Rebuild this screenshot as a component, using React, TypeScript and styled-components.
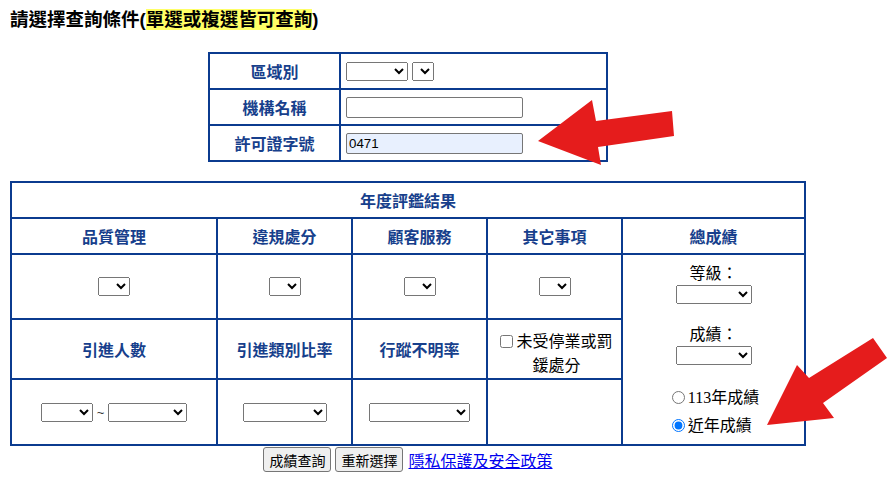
import React from "react";
import styled, { createGlobalStyle } from "styled-components";

const BORDER = "#0b3b8f";
const HEAD = "#173f8c";

const Global = createGlobalStyle`
  html, body { margin: 0; padding: 0; background: #fff; }
  body {
    font-family: "Liberation Serif", "Noto Sans CJK TC", serif;
    font-size: 16px;
    color: #000;
  }
`;

const Page = styled.div`
  position: relative;
  width: 896px;
  height: 484px;
  padding: 9px 0 0 10px;
  box-sizing: border-box;
  overflow: hidden;
`;

const Content = styled.div`
  width: 796px;
`;

const Title = styled.h1`
  margin: 0;
  font: bold 18.5px/22px "Liberation Sans", "Noto Sans CJK TC", sans-serif;
  color: #000;
`;

const Highlight = styled.span`
  background: #ffff66;
`;

const SearchTable = styled.table`
  margin: 21px auto 0;
  border-collapse: collapse;
`;

const LabelCell = styled.th`
  width: 129px;
  height: 34px;
  padding: 0;
  border: 2px solid ${BORDER};
  font: bold 16px "Noto Sans CJK TC", sans-serif;
  color: ${HEAD};
  text-align: center;
  vertical-align: middle;
`;

const FieldCell = styled.td`
  width: 260px;
  height: 34px;
  padding: 0 0 0 5px;
  border: 2px solid ${BORDER};
  vertical-align: middle;
`;

const FieldRow = styled.div`
  display: flex;
  align-items: center;
  gap: 4px;
`;

const Select = styled.select<{ $w: number }>`
  width: ${(p) => p.$w}px;
  height: 19px;
  font: 13.33px "Liberation Sans", sans-serif;
  margin: 0;
  box-sizing: border-box;
`;

const TextInput = styled.input<{ $filled?: boolean }>`
  width: 177px;
  height: 21px;
  box-sizing: border-box;
  margin: 0;
  padding: 1px 2px;
  font: 13.33px "Liberation Sans", sans-serif;
  border: 1px solid #767676;
  border-radius: 2px;
  background: ${(p) => (p.$filled ? "#e8f0fe" : "#fff")};
  color: #000;
`;

const ResultTable = styled.table`
  margin-top: 19px;
  width: 794px;
  border-collapse: collapse;
  table-layout: fixed;
`;

const HeadCell = styled.th<{ $h: number }>`
  height: ${(p) => p.$h}px;
  padding: 0;
  border: 2px solid ${BORDER};
  font: bold 16px "Noto Sans CJK TC", sans-serif;
  color: ${HEAD};
  text-align: center;
  vertical-align: middle;
`;

const SelectCell = styled.td<{ $h: number }>`
  height: ${(p) => p.$h}px;
  padding: 0;
  border: 2px solid ${BORDER};
  text-align: center;
  vertical-align: middle;
`;

const CenterRow = styled.div`
  display: flex;
  justify-content: center;
  align-items: center;
  gap: 4px;
`;

const Tilde = styled.span`
  font: 13px "Liberation Sans", sans-serif;
  color: #333;
`;

const CheckCell = styled.td<{ $h: number }>`
  height: ${(p) => p.$h}px;
  padding: 10px 0 0 4px;
  box-sizing: border-box;
  border: 2px solid ${BORDER};
  text-align: center;
  vertical-align: top;
  font-size: 16px;
  line-height: 24px;
`;

const Check = styled.input`
  width: 13px;
  height: 13px;
  margin: 0 3px 0 0;
  vertical-align: -1px;
`;

const TotalCell = styled.td`
  padding: 0;
  border: 2px solid ${BORDER};
  vertical-align: middle;
`;

const TotalStack = styled.div`
  display: flex;
  flex-direction: column;
  align-items: center;
`;

const TotalLabel = styled.div<{ $top: number }>`
  margin-top: ${(p) => p.$top}px;
  line-height: 23px;
  font-size: 16px;
`;

const RadioGroup = styled.div`
  margin-top: 21px;
  display: flex;
  flex-direction: column;
  align-items: flex-start;
  gap: 5px;
  padding-left: 4px;
`;

const RadioLabel = styled.label`
  display: flex;
  align-items: center;
  line-height: 23px;
  font-size: 16px;
`;

const Radio = styled.input`
  width: 13px;
  height: 13px;
  margin: 0 3px 0 0;
`;

const Actions = styled.div`
  display: flex;
  justify-content: center;
  align-items: center;
  gap: 4px;
  margin-top: 1px;
`;

const Button = styled.button`
  height: 25px;
  padding: 0 5px;
  font: 14px "Noto Sans CJK TC", sans-serif;
  color: #000;
  background: #efefef;
  border: 1px solid #767676;
  border-radius: 3px;
`;

const Policy = styled.a`
  margin-left: 1px;
  font: 16px "Liberation Serif", "Noto Sans CJK TC", serif;
  color: #0000ee;
  text-decoration: underline;
`;

const Overlay = styled.svg`
  position: absolute;
  left: 0;
  top: 0;
  pointer-events: none;
`;

export default function App() {
  return (
    <>
      <Global />
      <Page>
        <Content>
          <Title>
            請選擇查詢條件(<Highlight>單選或複選皆可查詢</Highlight>)
          </Title>

          <SearchTable>
            <tbody>
              <tr>
                <LabelCell>區域別</LabelCell>
                <FieldCell>
                  <FieldRow>
                    <Select $w={62}>
                      <option></option>
                    </Select>
                    <Select $w={22}>
                      <option></option>
                    </Select>
                  </FieldRow>
                </FieldCell>
              </tr>
              <tr>
                <LabelCell>機構名稱</LabelCell>
                <FieldCell>
                  <TextInput type="text" />
                </FieldCell>
              </tr>
              <tr>
                <LabelCell>許可證字號</LabelCell>
                <FieldCell>
                  <TextInput type="text" $filled defaultValue="0471" />
                </FieldCell>
              </tr>
            </tbody>
          </SearchTable>

          <ResultTable>
            <colgroup>
              <col style={{ width: 206 }} />
              <col style={{ width: 135 }} />
              <col style={{ width: 135 }} />
              <col style={{ width: 135 }} />
              <col style={{ width: 183 }} />
            </colgroup>
            <tbody>
              <tr>
                <HeadCell $h={34} colSpan={5}>
                  年度評鑑結果
                </HeadCell>
              </tr>
              <tr>
                <HeadCell $h={34}>品質管理</HeadCell>
                <HeadCell $h={34}>違規處分</HeadCell>
                <HeadCell $h={34}>顧客服務</HeadCell>
                <HeadCell $h={34}>其它事項</HeadCell>
                <HeadCell $h={34}>總成績</HeadCell>
              </tr>
              <tr>
                {[0, 1, 2, 3].map((i) => (
                  <SelectCell $h={63} key={i}>
                    <CenterRow>
                      <Select $w={32}>
                        <option></option>
                      </Select>
                    </CenterRow>
                  </SelectCell>
                ))}
                <TotalCell rowSpan={3}>
                  <TotalStack>
                    <TotalLabel $top={0}>等級：</TotalLabel>
                    <Select $w={76}>
                      <option></option>
                    </Select>
                    <TotalLabel $top={19}>成績：</TotalLabel>
                    <Select $w={76}>
                      <option></option>
                    </Select>
                    <RadioGroup>
                      <RadioLabel>
                        <Radio type="radio" name="year" />
                        113年成績
                      </RadioLabel>
                      <RadioLabel>
                        <Radio type="radio" name="year" defaultChecked />
                        近年成績
                      </RadioLabel>
                    </RadioGroup>
                  </TotalStack>
                </TotalCell>
              </tr>
              <tr>
                <HeadCell $h={58}>引進人數</HeadCell>
                <HeadCell $h={58}>引進類別比率</HeadCell>
                <HeadCell $h={58}>行蹤不明率</HeadCell>
                <CheckCell $h={60}>
                  <Check type="checkbox" />
                  未受停業或罰
                  <br />
                  鍰處分
                </CheckCell>
              </tr>
              <tr>
                <SelectCell $h={64}>
                  <CenterRow>
                    <Select $w={52}>
                      <option></option>
                    </Select>
                    <Tilde>~</Tilde>
                    <Select $w={79}>
                      <option></option>
                    </Select>
                  </CenterRow>
                </SelectCell>
                <SelectCell $h={64}>
                  <CenterRow>
                    <Select $w={84}>
                      <option></option>
                    </Select>
                  </CenterRow>
                </SelectCell>
                <SelectCell $h={64}>
                  <CenterRow>
                    <Select $w={101}>
                      <option></option>
                    </Select>
                  </CenterRow>
                </SelectCell>
                <SelectCell $h={64} />
              </tr>
            </tbody>
          </ResultTable>

          <Actions>
            <Button type="button">成績查詢</Button>
            <Button type="button">重新選擇</Button>
            <Policy href="#">隱私保護及安全政策</Policy>
          </Actions>
        </Content>

        <Overlay width={896} height={484} viewBox="0 0 896 484">
          <polygon
            points="538,141 592,100 596,121 672,111 674,136 598,147 601,165"
            fill="#e51c1c"
          />
          <polygon
            points="767,425 797,365 809,378 873,338 887,358 823,403 834,418"
            fill="#e51c1c"
          />
        </Overlay>
      </Page>
    </>
  );
}
